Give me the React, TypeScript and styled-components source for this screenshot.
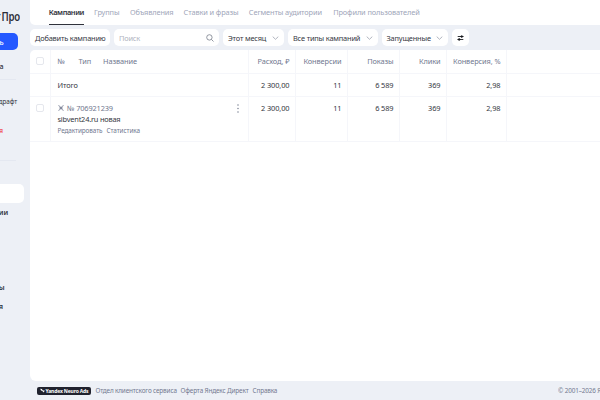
import React from "react";
import styled, { createGlobalStyle } from "styled-components";

const GlobalStyle = createGlobalStyle`
  * {
    box-sizing: border-box;
  }
  body {
    margin: 0;
    overflow: hidden;
    font-family: "Noto Sans", "Open Sans", sans-serif;
    font-size: 7.4px;
    letter-spacing: -0.1px;
    color: #35373f;
    background: #edf0f6;
  }
`;

const Page = styled.div`
  display: flex;
  width: 600px;
  height: 400px;
  overflow: hidden;
  white-space: nowrap;
`;

const Sidebar = styled.aside`
  display: flex;
  flex-direction: column;
  flex: 0 0 30px;
  height: 400px;
  overflow: hidden;
`;
const Logo = styled.div`
  display: flex;
  justify-content: flex-end;
  width: 20px;
  height: 16px;
  margin-top: 9px;
  font-size: 12px;
  line-height: 16px;
  font-weight: 600;
  letter-spacing: -0.2px;
  word-spacing: -1.4px;
  color: #2b2d38;
  transform: scaleX(0.8);
  transform-origin: right center;
`;
const CreateButton = styled.div`
  width: 18px;
  height: 17px;
  margin-top: 8px;
  padding-right: 14.5px;
  display: flex;
  align-items: center;
  justify-content: flex-end;
  border-radius: 0 5px 5px 0;
  background: #2458ff;
  color: #ffffff;
  font-weight: 500;
`;
const SideItem = styled.div<{ $width: number; $top: number; $color?: string; $weight?: number; $size?: number }>`
  display: flex;
  justify-content: flex-end;
  width: ${props => props.$width}px;
  height: 10px;
  margin-top: ${props => props.$top}px;
  line-height: 10px;
  font-size: ${props => props.$size || 7.2}px;
  font-weight: ${props => props.$weight || 500};
  color: ${props => props.$color || "#30323b"};
`;
const SideLine = styled.div<{ $top: number }>`
  width: 16px;
  height: 1px;
  margin-top: ${props => props.$top}px;
  background: #e4e8f1;
`;
const ActiveItem = styled.div`
  width: 24px;
  height: 19px;
  margin-top: 23px;
  border-radius: 0 5px 5px 0;
  background: #ffffff;
`;

const Main = styled.main`
  display: flex;
  flex-direction: column;
  flex: 1;
  min-width: 0;
`;
const Tabs = styled.nav`
  display: flex;
  height: 25px;
  padding-left: 18.7px;
  background: #ffffff;
  border-bottom-left-radius: 5px;
`;
const Tab = styled.div<{ $width: number; $active?: boolean }>`
  width: ${props => props.$width}px;
  height: 25px;
  margin-right: 10.3px;
  line-height: 25px;
  color: ${props => (props.$active ? "#30323b" : "#a0a6b9")};
  font-weight: ${props => (props.$active ? 600 : 400)};
  letter-spacing: ${props => (props.$active ? -0.4 : -0.12)}px;
  border-bottom: ${props => (props.$active ? "1px solid #30323b" : "none")};
`;

const Toolbar = styled.div`
  display: flex;
  gap: 4px;
  height: 25px;
  padding-top: 4px;
`;
const Control = styled.div<{ $width: number; $muted?: boolean }>`
  display: flex;
  align-items: center;
  justify-content: space-between;
  width: ${props => props.$width}px;
  height: 17px;
  padding: 0 5px;
  border-radius: 5px;
  background: #ffffff;
  color: ${props => (props.$muted ? "#b0b4c0" : "#35373f")};
  letter-spacing: -0.18px;
`;

const Card = styled.section`
  height: 331px;
  background: #ffffff;
  border-radius: 5px 0 0 6px;
`;
const Row = styled.div<{ $height: number; $head?: boolean }>`
  display: grid;
  grid-template-columns: 21px 198px 47px 52px 52px 47px 60px 1fr;
  height: ${props => props.$height}px;
  border-bottom: 1px solid #f5f6fa;
  color: ${props => (props.$head ? "#71788f" : "#35373f")};
`;
const Cell = styled.div<{ $right?: boolean }>`
  display: flex;
  justify-content: ${props => (props.$right ? "flex-end" : "flex-start")};
  padding: 6px 5.5px 0 6.5px;
  line-height: 10px;
  border-right: 1px solid #f5f6fa;
`;
const HeadName = styled.span<{ $width: number }>`
  width: ${props => props.$width}px;
`;
const Checkbox = styled.div`
  width: 8px;
  height: 8px;
  margin: 1px 0 0 -0.5px;
  border: 1px solid #e5e7ed;
  border-radius: 2px;
`;
const Campaign = styled.div`
  display: flex;
  flex-direction: column;
  flex: 1;
`;
const CampaignId = styled.div`
  display: flex;
  align-items: center;
  gap: 3.5px;
  height: 10px;
  letter-spacing: -0.15px;
  color: #71788f;
`;
const CampaignName = styled.div`
  height: 11px;
  line-height: 12px;
  letter-spacing: -0.2px;
`;
const Actions = styled.div`
  display: flex;
  gap: 4px;
  padding-top: 1px;
  height: 11px;
  line-height: 11px;
  font-size: 6.4px;
  color: #71788f;
`;
const More = styled.div`
  padding: 1px 3.5px 0 0;
`;

const Footer = styled.footer`
  display: flex;
  align-items: center;
  height: 19px;
  padding-left: 7px;
  font-size: 6.4px;
  letter-spacing: -0.15px;
  color: #737990;
`;
const NeuroBadge = styled.div`
  display: flex;
  align-items: center;
  gap: 1px;
  width: 54px;
  height: 8px;
  margin-right: 4.5px;
  padding-left: 2.5px;
  border-radius: 2px;
  background: #20222e;
  color: #ffffff;
  font-size: 5px;
  line-height: 8px;
  font-weight: 700;
`;
const FooterLink = styled.span<{ $width: number }>`
  width: ${props => props.$width}px;
  margin-right: 4px;
`;
const Copyright = styled.span`
  flex: 0 0 42px;
  margin-left: auto;
  overflow: hidden;
`;

const Chevron = () => (
  <svg width="7" height="4" viewBox="0 0 7 4" fill="none">
    <path d="M.7.6 3.5 3.3 6.3.6" stroke="#9da2af" strokeWidth=".8" />
  </svg>
);
const SearchIcon = () => (
  <svg width="8" height="8" viewBox="0 0 8 8" fill="none" stroke="#777d8a" strokeWidth=".8">
    <circle cx="3.4" cy="3.4" r="2.7" />
    <path d="m5.4 5.4 2.1 2.1" />
  </svg>
);
const FilterIcon = () => (
  <svg width="8" height="8" viewBox="0 0 8 8" fill="none" stroke="#191a1e">
    <path d="M.8 2.3h6.7M.5 5.7h6.7" strokeWidth="1" />
    <circle cx="5.4" cy="2.3" r="1" fill="#191a1e" strokeWidth=".8" />
    <circle cx="2.5" cy="5.7" r="1" fill="#191a1e" strokeWidth=".8" />
  </svg>
);
const TypeIcon = () => (
  <svg width="6" height="6" viewBox="0 0 6 6" fill="none" stroke="#747b91" strokeWidth=".9">
    <path d="M.5.6q1 0 1.6 1.2T3 3l.9-1.2Q4.5.6 5.5.6M.5 5.4q1 0 1.6-1.2T3 3l.9 1.2q.6 1.2 1.6 1.2M1.2 3h3.6" />
  </svg>
);
const MoreIcon = () => (
  <svg width="2" height="9" viewBox="0 0 2 9" fill="#858b9b">
    <circle cx="1" cy="1" r=".8" />
    <circle cx="1" cy="4.5" r=".8" />
    <circle cx="1" cy="8" r=".8" />
  </svg>
);
const NeuroIcon = () => (
  <svg width="5" height="5" viewBox="0 0 5 5" fill="#ffffff">
    <path d="m.2.7 1.8.3.5 1.2L5 2.7 3.2 4.4 2.5 3 1 2.5Z" />
  </svg>
);

const tabs = [
  { label: "Кампании", width: 35, active: true },
  { label: "Группы", width: 25.7 },
  { label: "Объявления", width: 43.3 },
  { label: "Ставки и фразы", width: 55 },
  { label: "Сегменты аудитории", width: 74 },
  { label: "Профили пользователей", width: 87 }
];
const headings = ["Расход, ₽", "Конверсии", "Показы", "Клики", "Конверсия, %"];
const values = ["2 300,00", "11", "6 589", "369", "2,98"];

const renderCells = (items: string[]) =>
  items.map(item => (
    <Cell key={item} $right>
      {item}
    </Cell>
  ));

export default function App() {
  return (
    <Page>
      <GlobalStyle />
      <Sidebar>
        <Logo>т Про</Logo>
        <CreateButton>ь</CreateButton>
        <SideItem $width={3.5} $top={10.5}>а</SideItem>
        <SideLine $top={8} />
        <SideItem $width={17} $top={17.5} $size={6.3} $weight={400}>драфт</SideItem>
        <SideItem $width={2.8} $top={18.5} $size={6.4} $color="#f0343f">я</SideItem>
        <SideLine $top={24} />
        <ActiveItem />
        <SideItem $width={8} $top={4} $weight={600}>ии</SideItem>
        <SideItem $width={4.5} $top={65} $weight={600}>ы</SideItem>
        <SideItem $width={2.8} $top={9} $weight={600}>я</SideItem>
      </Sidebar>
      <Main>
        <Tabs>
          {tabs.map(tab => (
            <Tab key={tab.label} $width={tab.width} $active={tab.active}>
              {tab.label}
            </Tab>
          ))}
        </Tabs>
        <Toolbar>
          <Control $width={80}>Добавить кампанию</Control>
          <Control $width={105} $muted>
            Поиск
            <SearchIcon />
          </Control>
          <Control $width={61}>
            Этот месяц
            <Chevron />
          </Control>
          <Control $width={89.5}>
            Все типы кампаний
            <Chevron />
          </Control>
          <Control $width={66}>
            Запущенные
            <Chevron />
          </Control>
          <Control $width={17}>
            <FilterIcon />
          </Control>
        </Toolbar>
        <Card>
          <Row $height={24} $head>
            <Cell>
              <Checkbox />
            </Cell>
            <Cell>
              <HeadName $width={21}>№</HeadName>
              <HeadName $width={24.5}>Тип</HeadName>
              <HeadName $width={35}>Название</HeadName>
            </Cell>
            {renderCells(headings)}
          </Row>
          <Row $height={23}>
            <Cell />
            <Cell>Итого</Cell>
            {renderCells(values)}
          </Row>
          <Row $height={45}>
            <Cell>
              <Checkbox />
            </Cell>
            <Cell>
              <Campaign>
                <CampaignId>
                  <TypeIcon />
                  <span>№ 706921239</span>
                </CampaignId>
                <CampaignName>sibvent24.ru новая</CampaignName>
                <Actions>
                  <span>Редактировать</span>
                  <span>Статистика</span>
                </Actions>
              </Campaign>
              <More>
                <MoreIcon />
              </More>
            </Cell>
            {renderCells(values)}
          </Row>
        </Card>
        <Footer>
          <NeuroBadge>
            <NeuroIcon />
            Yandex Neuro Ads
          </NeuroBadge>
          <FooterLink $width={81}>Отдел клиентского сервиса</FooterLink>
          <FooterLink $width={68}>Оферта Яндекс Директ</FooterLink>
          <FooterLink $width={26}>Справка</FooterLink>
          <Copyright>© 2001–2026 Яндекс</Copyright>
        </Footer>
      </Main>
    </Page>
  );
}
